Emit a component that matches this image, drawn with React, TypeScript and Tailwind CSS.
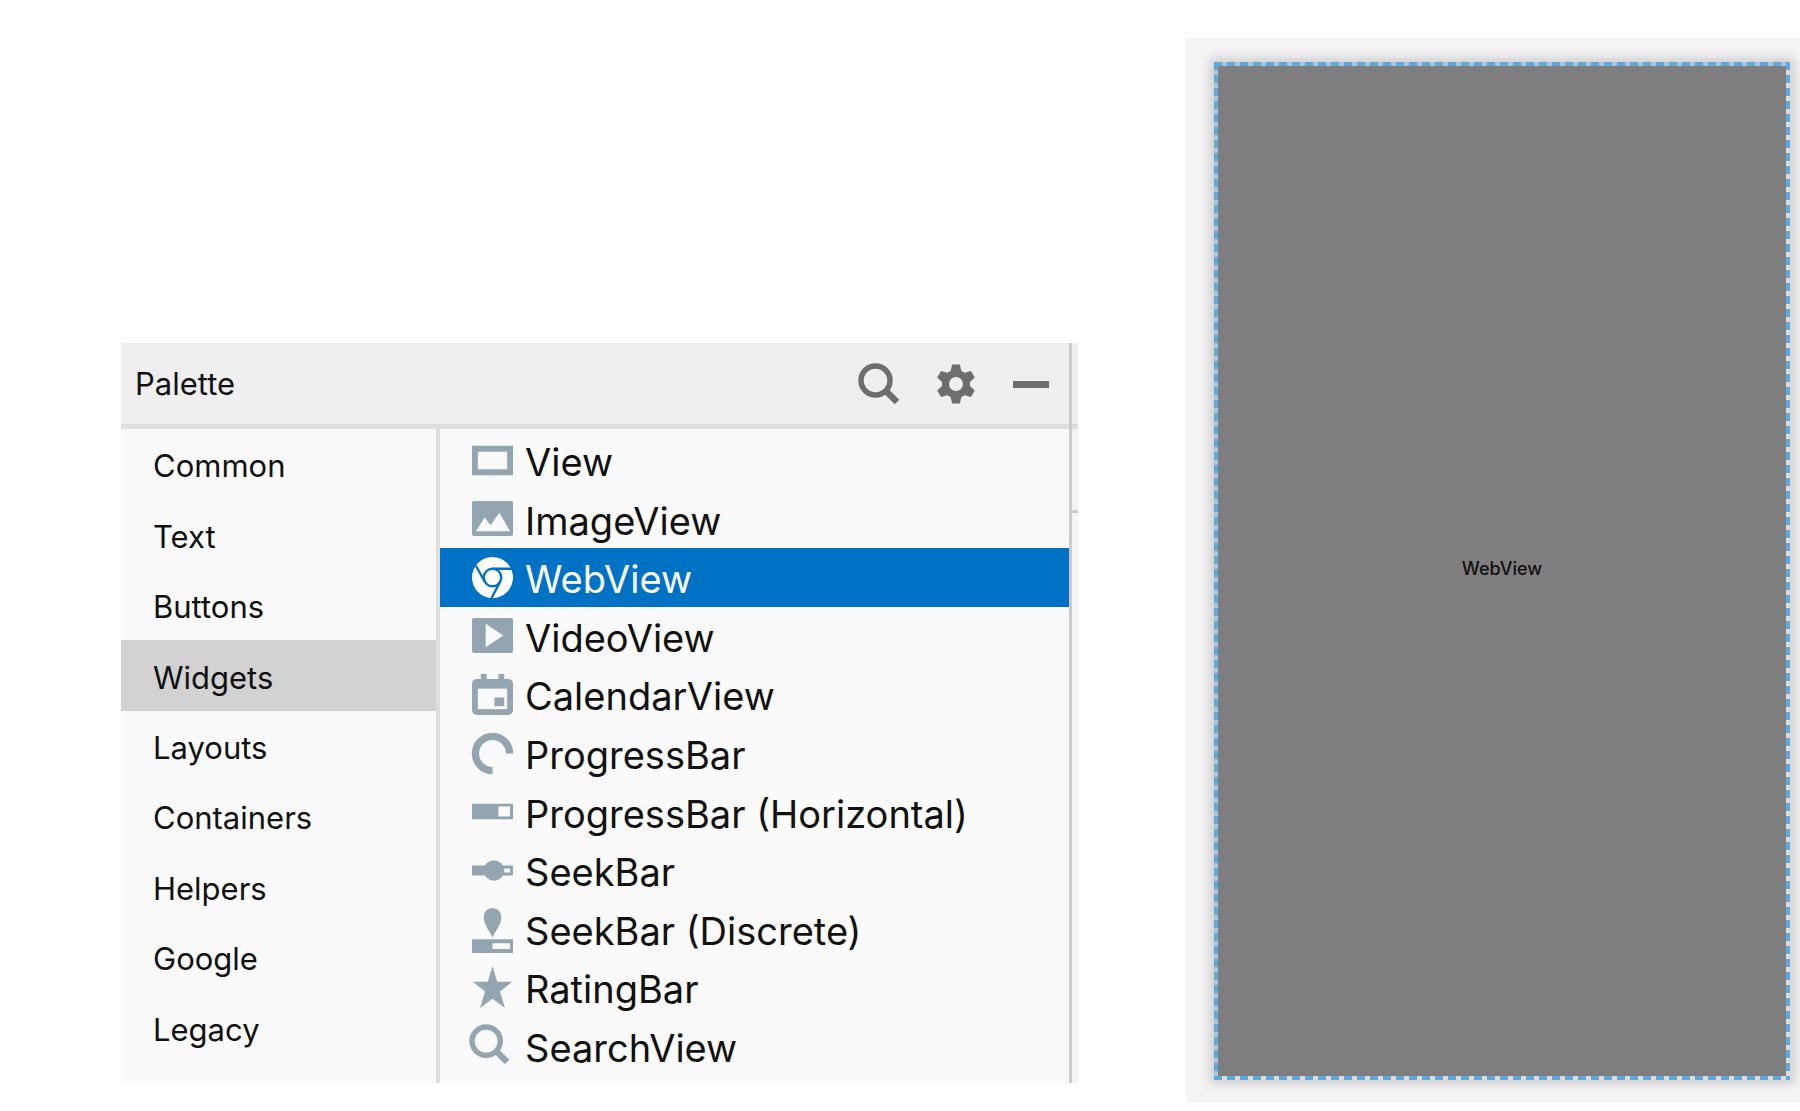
import type { ReactNode } from "react";

const categories = [
  "Common",
  "Text",
  "Buttons",
  "Widgets",
  "Layouts",
  "Containers",
  "Helpers",
  "Google",
  "Legacy",
];

const SearchGlyph = ({ className }: { className: string }) => (
  <svg viewBox="0 0 42 42" className={className} fill="none" stroke="currentColor" aria-hidden="true">
    <circle cx="17.5" cy="17.5" r="14.5" strokeWidth="5.5" />
    <path d="M27 27 39 39" strokeWidth="6.5" />
  </svg>
);

const gearTeeth = [0, 60, 120, 180, 240, 300];

// Every widget icon is drawn on a 42x42 grid
const widgets: { name: string; icon: ReactNode }[] = [
  {
    name: "View",
    icon: <path fillRule="evenodd" d="M0 6h42v30H0zM6 12v18h30V12z" />,
  },
  {
    name: "ImageView",
    icon: (
      <>
        <rect y="3" width="42" height="36" rx="2" />
        <path className="fill-[#fafafa]" d="M4 34 13 20l6 8 9-13 11 19z" />
      </>
    ),
  },
  {
    name: "WebView",
    icon: (
      <>
        <circle cx="21" cy="21" r="21" />
        <g className="fill-none stroke-[#0072c6]" strokeWidth="2.4">
          <circle cx="21" cy="21" r="9" />
          <path d="M21 12h20M13.2 25.5 4 9M28.8 25.5 20 42" />
        </g>
      </>
    ),
  },
  {
    name: "VideoView",
    icon: (
      <>
        <rect y="3" width="42" height="36" rx="2" />
        <path className="fill-[#fafafa]" d="M14 9v24l18-12z" />
      </>
    ),
  },
  {
    name: "CalendarView",
    icon: (
      <>
        <path d="M9 0h6v5h12V0h6v5h4a5 5 0 0 1 5 5v27a5 5 0 0 1-5 5H5a5 5 0 0 1-5-5V10a5 5 0 0 1 5-5h4z" />
        <path className="fill-[#fafafa]" d="M6 15h30v21H6z" />
        <path d="M23 24h10v9H23z" />
      </>
    ),
  },
  {
    name: "ProgressBar",
    icon: <path fill="none" stroke="currentColor" strokeWidth="7.5" d="M38.5 21A17.5 17.5 0 1 0 21 38.5" />,
  },
  {
    name: "ProgressBar (Horizontal)",
    icon: <path fillRule="evenodd" d="M0 13h42v16H0zM27 16v10h12V16z" />,
  },
  {
    name: "SeekBar",
    icon: (
      <>
        <path fillRule="evenodd" d="M0 16h42v10H0zM33 19v4h6v-4z" />
        <circle cx="22.5" cy="21" r="10.5" />
      </>
    ),
  },
  {
    name: "SeekBar (Discrete)",
    icon: (
      <>
        <path d="M21 0a9 9 0 0 1 9 9c0 8-5 13-9 21-4-8-9-13-9-21a9 9 0 0 1 9-9z" />
        <path fillRule="evenodd" d="M0 32h42v14H0zM21 36v6h18v-6z" />
      </>
    ),
  },
  {
    name: "RatingBar",
    icon: <path d="m21-1 4.8 16.2H41L28.7 25l5 17L21 32.4 8.3 42l5-17L1 15.2h15.2z" />,
  },
  {
    name: "SearchView",
    icon: (
      <g fill="none" stroke="currentColor">
        <circle cx="14.5" cy="16.5" r="14.5" strokeWidth="5.5" />
        <path d="M24 26 36 38" strokeWidth="6.5" />
      </g>
    ),
  },
];

function Palette() {
  return (
    <section className="flex h-[740px] text-[#111111]">
      <div className="flex flex-1 flex-col bg-[#fafafa]">
        <header className="flex h-[86px] items-center border-b-[5px] border-[#dedede] bg-[#efefef] pr-[19px] pl-[14px]">
          <h2 className="flex-1 text-[31px] leading-9">Palette</h2>
          <div className="flex items-center gap-[37px] text-[#6e6e6e]">
            <button aria-label="Search">
              <SearchGlyph className="block size-[42px]" />
            </button>
            <button aria-label="Settings">
              <svg
                viewBox="-19 -19 38 38"
                className="block size-[38px] overflow-visible"
                fill="currentColor"
                aria-hidden="true"
              >
                <circle r="10.5" fill="none" stroke="currentColor" strokeWidth="7" />
                {gearTeeth.map((angle) => (
                  <path key={angle} d="M-3.8-19.5h7.6l2 8h-11.6z" transform={`rotate(${angle})`} />
                ))}
              </svg>
            </button>
            <button aria-label="Hide">
              <svg viewBox="0 0 38 38" className="block size-[38px]" fill="currentColor" aria-hidden="true">
                <path d="M1 16h36v7H1z" />
              </svg>
            </button>
          </div>
        </header>

        <div className="flex flex-1">
          <nav className="flex w-[319px] flex-col border-r-4 border-[#dedede] pb-5">
            {categories.map((name) => (
              <button
                key={name}
                className={`flex flex-1 items-center pt-1 pl-8 text-[31px] leading-9 ${
                  name === "Widgets" ? "bg-[#d2d2d2]" : ""
                }`}
              >
                {name}
              </button>
            ))}
          </nav>

          <ul className="flex flex-1 flex-col pt-0.5 pb-2">
            {widgets.map(({ name, icon }) => (
              <li key={name} className="flex flex-1">
                <button
                  className={`flex flex-1 items-center gap-3 pl-8 ${
                    name === "WebView" ? "bg-[#0072c6] text-white" : ""
                  }`}
                >
                  <svg
                    viewBox="0 0 42 42"
                    className={`size-[41px] overflow-visible fill-current ${
                      name === "WebView" ? "text-white" : "text-[#93a5b1]"
                    }`}
                    aria-hidden="true"
                  >
                    {icon}
                  </svg>
                  <span className="pt-1 text-[38px] leading-10">{name}</span>
                </button>
              </li>
            ))}
          </ul>
        </div>
      </div>

      {/* Edge of the neighbouring editor */}
      <div className="flex w-[9px] flex-col border-l-[3px] border-[#cbcbcb] bg-[#f4f4f4]">
        <div className="h-[86px] border-b-[5px] border-[#dedede] bg-[#efefef]" />
        <div className="h-[84px] border-b-[3px] border-[#cbcbcb]" />
      </div>
    </section>
  );
}

function Preview() {
  return (
    <section className="bg-[#f4f4f4] pt-6 pr-[10px] pb-[22px] pl-7">
      <div className="relative flex h-[1018px] items-center justify-center border-4 border-t-[#a9c4d8] border-r-[#dcdcdc] border-b-[#dcdcdc] border-l-[#a9c4d8] bg-[#7e7e7e] pb-1 shadow-[0_0_10px_4px_rgba(0,0,0,0.16)]">
        <span className="text-[18px] leading-6 font-medium text-[#111111]">WebView</span>
        <svg className="absolute -inset-1 h-[calc(100%+8px)] w-[calc(100%+8px)]" aria-hidden="true">
          <g stroke="#5fa8dc" strokeWidth="8" strokeDasharray="8 5">
            <line x1="0" y1="0" x2="100%" y2="0" />
            <line x1="0" y1="100%" x2="100%" y2="100%" />
            <line x1="0" y1="0" x2="0" y2="100%" />
            <line x1="100%" y1="0" x2="100%" y2="100%" />
          </g>
        </svg>
      </div>
    </section>
  );
}

export default function App() {
  return (
    <main className="flex min-h-screen items-start bg-white font-['Inter',sans-serif]">
      <div className="flex-1 pt-[343px] pr-[108px] pl-[121px]">
        <Palette />
      </div>
      <div className="w-[614px] pt-[38px]">
        <Preview />
      </div>
    </main>
  );
}
